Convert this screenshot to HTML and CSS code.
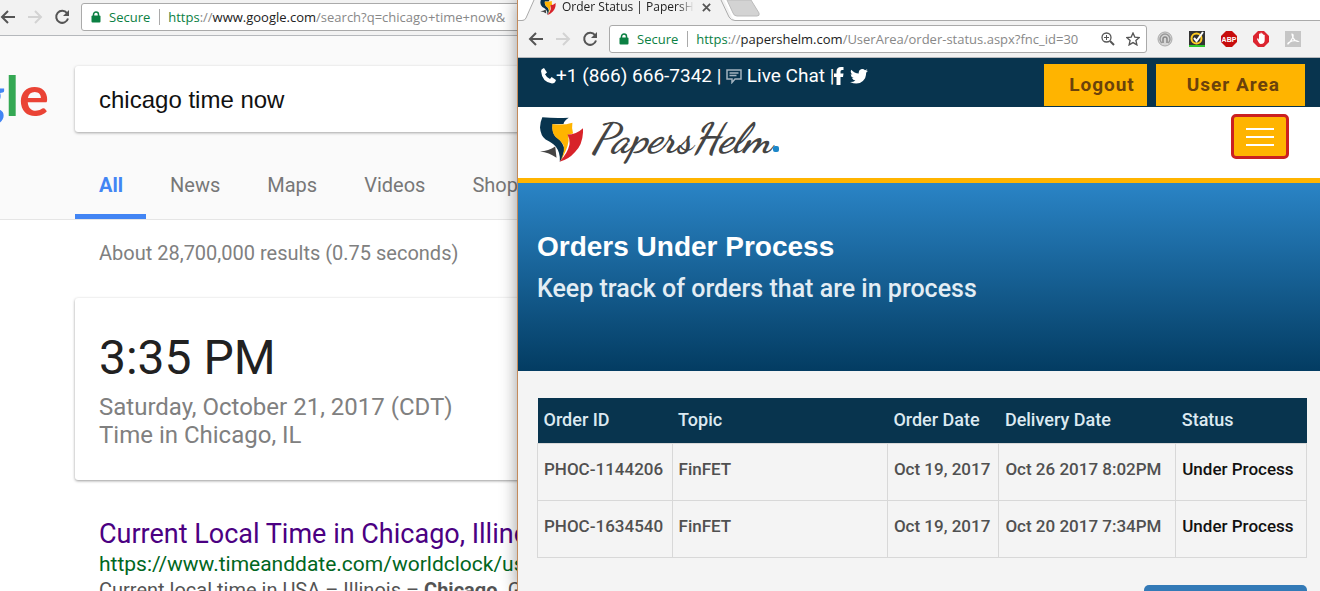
FILE: index.html
```html
<!DOCTYPE html>
<html lang="en">
  <head>
    <meta charset="utf-8" />
    <meta name="viewport" content="width=device-width,initial-scale=1" />
    <title>Order Status | PapersHelm</title>
    <link rel="stylesheet" href="styles.css">
  </head>
  <body>
    <!-- shared icons -->
    <svg class="sprite" aria-hidden="true">
      <symbol id="back" viewBox="0 0 16 16">
        <path d="M15 8H2M8 2L2 8l6 6" fill="none" stroke="currentColor" stroke-width="2" />
      </symbol>
      <symbol id="forward" viewBox="0 0 16 16">
        <path d="M1 8h13M8 2l6 6-6 6" fill="none" stroke="currentColor" stroke-width="2" />
      </symbol>
      <symbol id="reload" viewBox="0 0 16 16">
        <path d="M13 4.2A6 6 0 1 0 14 9.500" fill="none" stroke="currentColor" stroke-width="2" />
        <path d="M15 1v6H9z" fill="currentColor" />
      </symbol>
      <symbol id="lock" viewBox="0 0 10 12">
        <path d="M2.500 6V3.500a2.500 2.500 0 0 1 5 0V6" fill="none" stroke="currentColor" stroke-width="1.500" />
        <rect x="0.500" y="4.500" width="9" height="7" rx="1" fill="currentColor" />
      </symbol>
      <symbol id="shield" viewBox="60 182 130 136">
        <path d="M60 286Q86 284 106 271L110 305Q88 289 60 286z" fill="#444" />
        <path d="M67 183Q106 186 147 184Q133 192 131 203L99 204Q95 226 106 240Q134 260 133 282Q132 302 120 317Q122 290 108 272Q98 260 77 250Q62 240 60 214Q61 196 67 183z" fill="#08344e" />
        <path d="M97 203Q130 208 158 199Q155 215 160 232L144 236Q154 262 122 314Q138 280 130 265Q124 254 108 243Q95 230 97 203z" fill="#ffb400" />
        <path d="M143 235Q170 235 190 216Q192 262 166 288Q145 312 119 317Q144 291 149 266Q151 250 143 235z" fill="#d8232a" />
      </symbol>
    </svg>

    <div class="desktop">
      <section class="window google">
        <div class="toolbar">
          <button type="button" class="tool" aria-label="Back"><svg><use href="#back" /></svg></button>
          <button type="button" class="tool off" aria-label="Forward" disabled><svg><use href="#forward" /></svg></button>
          <button type="button" class="tool" aria-label="Reload"><svg><use href="#reload" /></svg></button>
          <div class="address">
            <svg class="lock"><use href="#lock" /></svg>
            <span class="secure">Secure</span>
            <span class="url"><span class="scheme">https</span>://<b>www.google.com</b>/search?q=chicago+time+now&amp;</span>
          </div>
        </div>

        <header class="search-head">
          <div class="search-row">
            <a class="g-logo" href="#" aria-label="Google home"><span class="g-blue">g</span><span class="g-green">l</span><span class="g-red">e</span></a>
            <input class="search-box" type="text" name="q" value="chicago time now" aria-label="Search" />
          </div>
          <nav class="search-tabs">
            <a class="active" href="#">All</a>
            <a href="#">News</a>
            <a href="#">Maps</a>
            <a href="#">Videos</a>
            <a href="#">Shopping</a>
          </nav>
        </header>

        <main class="results">
          <p class="stats">About 28,700,000 results (0.75 seconds)</p>
          <div class="time-card">
            <div class="clock">3:35 PM</div>
            <div>Saturday, October 21, 2017 (CDT)</div>
            <div>Time in Chicago, IL</div>
          </div>
          <article class="result">
            <a href="#">Current Local Time in Chicago, Illinois</a>
            <cite>https://www.timeanddate.com/worldclock/usa</cite>
            <p>Current local time in USA – Illinois – <b>Chicago</b>. Get</p>
          </article>
        </main>
      </section>

      <section class="window helm">
        <div class="tab-strip">
          <svg class="tab-shape" viewBox="0 0 246 21" aria-hidden="true">
            <path d="M0 20.500H4Q7 20.500 8 18L16 0H206L214 17Q216 20.500 219 20.500V21H0z" fill="#f2f2f2" />
            <path d="M0 20.500H4Q7 20.500 8 18L16 0M203 0L211 17Q213 20.500 217 20.500H246" fill="none" stroke="#aaa" />
            <path d="M209 0H233L241 13Q242 16 239 16H219Q216 16 215 13z" fill="#d3d3d3" stroke="#bbb" />
          </svg>
          <div class="tab">
            <svg class="favicon"><use href="#shield" /></svg>
            <span class="tab-title">Order Status | PapersHelm</span>
            <button type="button" class="tab-close" aria-label="Close tab">
              <svg viewBox="0 0 10 10"><path d="M1 1l8 8M9 1L1 9" stroke="#555" stroke-width="2" /></svg>
            </button>
          </div>
        </div>
        <div class="toolbar">
          <button type="button" class="tool" aria-label="Back"><svg><use href="#back" /></svg></button>
          <button type="button" class="tool off" aria-label="Forward" disabled><svg><use href="#forward" /></svg></button>
          <button type="button" class="tool" aria-label="Reload"><svg><use href="#reload" /></svg></button>
          <div class="address">
            <svg class="lock"><use href="#lock" /></svg>
            <span class="secure">Secure</span>
            <span class="url"><span class="scheme">https</span>://<b>papershelm.com</b>/UserArea/order-status.aspx?fnc_id=30</span>
            <svg class="addr-icon" viewBox="0 0 14 14" fill="none" stroke="#555"><circle cx="5.500" cy="5.500" r="4.500" stroke-width="1.300" /><path d="M9 9l4 4" stroke-width="2" /><path d="M3 5.500h5M5.500 3v5" /></svg>
            <svg class="addr-icon" viewBox="0 0 14 14" fill="none" stroke="#555" stroke-width="1.300"><path d="M7 1l1.800 4.100 4.400.4-3.300 3 1 4.400L7 10.600l-3.900 2.300 1-4.400-3.300-3 4.400-.4z" /></svg>
          </div>
          <div class="extensions">
            <svg viewBox="0 0 16 16"><circle cx="8" cy="8" r="7" fill="#d6d6d6" stroke="#aaa" /><path d="M5 12a5 5 0 1 1 6 0" fill="none" stroke="#999" stroke-width="1.500" /><path d="M6 12V8a2 2 0 0 1 4 0v4" fill="none" stroke="#888" stroke-width="1.500" /></svg>
            <svg viewBox="0 0 16 16"><path d="M0 0h16v16H0z" fill="#333" /><path d="M0 14h16v2H0z" fill="#2fc52f" /><circle cx="7.500" cy="7.500" r="5" fill="none" stroke="#fc2" stroke-width="2" /><path d="M5 7l2.500 3L14 1" fill="none" stroke="#fff" stroke-width="2" /></svg>
            <svg viewBox="0 0 16 16"><path d="M5 0h6l5 5v6l-5 5H5l-5-5V5z" fill="#c70d0d" /><text x="8" y="11" class="abp">ABP</text></svg>
            <svg viewBox="0 0 16 16"><path d="M5 0h6l5 5v6l-5 5H5l-5-5V5z" fill="#dc2530" /><path d="M4 8l1-1 1 2V3q.7-1 1.400 0V2q.7-1 1.400 0v1q.8-1 1.500 0v1q.8-.7 1.400 0v5q0 4-4 4Q6 13 4 8z" fill="#fff" /></svg>
            <svg viewBox="0 0 16 16"><path d="M0 0h16v16H0z" fill="#c6c6c6" /><path d="M7 3q2 0 .500 4Q5.500 11 3 13q-1-1 4-3 4-1 6 .500-3 0-5-4Q7 4 7 3z" fill="none" stroke="#fff" stroke-width="1.200" /></svg>
          </div>
        </div>

        <div class="top-bar">
          <div class="contact">
            <svg class="phone" viewBox="0 0 16 16"><path d="M1 3Q1 1 4 0l3 4.500-2 1.800Q6.500 9.500 10 11l1.600-2L16 12q-1 3.500-4 3.500Q2 14 1 3z" fill="#fff" /></svg><span>+1 (866) 666-7342 |&nbsp;</span>
            <svg class="chat" viewBox="0 0 16 15"><path d="M1 1h14v9H9l-3 3.500V10H1z" fill="none" stroke="#a3b3bf" stroke-width="1.500" /><path d="M3.500 4h9M3.500 6.500h7" stroke="#a3b3bf" stroke-width="1.300" /></svg><a href="#">&nbsp;Live Chat</a><span>&nbsp;|</span>
            <a href="#" aria-label="Facebook"><svg class="facebook" viewBox="0 0 10 18"><path d="M9.500 0v3H8Q6.500 3 6.500 4.500V6.500h3L9 10H6.500v8h-4v-8H0V6.500h2.500V4.500Q2.500 0 7 0z" fill="#fff" /></svg></a>
            <a href="#" aria-label="Twitter"><svg class="twitter" viewBox="0 0 18 15"><path d="M18 1.800q-.8 1.200-1.900 1.900.2 5-3.200 8.300Q8 16.500 0 13q3.200.2 5.400-1.600-2.500-.2-3.400-2.500h1.600Q.8 8 .7 5.200l1.700.4Q-.2 3.500 1.300.7q3 3.600 7.500 3.900Q8.200 1.200 11 .2q2.300-.7 4 1 1.200-.2 2.300-.9-.4 1.300-1.500 2z" fill="#fff" /></svg></a>
          </div>
          <div class="account">
            <a class="btn logout" href="#">Logout</a>
            <a class="btn user-area" href="#">User Area</a>
          </div>
        </div>

        <header class="site-head">
          <a class="brand" href="#">
            <svg class="brand-mark"><use href="#shield" /></svg>
            <span class="brand-name">PapersHelm<span class="dot"></span></span>
          </a>
          <button type="button" class="menu" aria-label="Toggle navigation">
            <span></span><span></span><span></span>
          </button>
        </header>

        <div class="banner">
          <h1>Orders Under Process</h1>
          <p>Keep track of orders that are in process</p>
        </div>

        <main class="orders">
          <table>
            <colgroup>
              <col class="c-id" /><col class="c-topic" /><col class="c-ordered" /><col class="c-due" /><col class="c-status" />
            </colgroup>
            <thead>
              <tr>
                <th>Order ID</th>
                <th>Topic</th>
                <th>Order Date</th>
                <th>Delivery Date</th>
                <th>Status</th>
              </tr>
            </thead>
            <tbody>
              <tr>
                <td>PHOC-1144206</td>
                <td>FinFET</td>
                <td>Oct 19, 2017</td>
                <td>Oct 26 2017 8:02PM</td>
                <td class="status">Under Process</td>
              </tr>
              <tr>
                <td>PHOC-1634540</td>
                <td>FinFET</td>
                <td>Oct 19, 2017</td>
                <td>Oct 20 2017 7:34PM</td>
                <td class="status">Under Process</td>
              </tr>
            </tbody>
          </table>
          <button type="button" class="next" aria-label="Place new order"></button>
        </main>
      </section>
    </div>
  </body>
</html>
```

FILE: styles.css
```css
*,
:after,
:before {
  box-sizing: border-box;
}

html,
body {
  height: 100%;
}

body {
  margin: 0;
  overflow: hidden;
  font-family: Roboto, sans-serif;
}

h1,
p {
  margin: 0;
}

a {
  color: inherit;
  text-decoration: none;
}

button {
  padding: 0;
  border: 0;
  background: none;
}

svg {
  display: block;
  flex: none;
}

.sprite {
  position: absolute;
  width: 0;
  height: 0;
}

.desktop {
  display: grid;
  grid-template-columns: minmax(0, 517fr) minmax(0, 803fr);
  height: 100%;
  overflow: hidden;
}

.window {
  overflow: hidden;
  background: #fff;
}

/* browser chrome */

.toolbar {
  display: flex;
  align-items: center;
  height: 37px;
  padding-left: 10px;
  border-bottom: 1px solid #b5b8bc;
  background: #f2f2f2;
  font: 13px/20px "Open Sans", sans-serif;
}

.tool {
  flex: none;
  margin-right: 11px;
  color: #555;
}

.tool.off {
  color: #d3d3d3;
}

.tool svg {
  width: 16px;
  height: 16px;
}

.address {
  display: flex;
  align-items: center;
  flex: 1;
  min-width: 0;
  height: 28px;
  padding: 0 6px 0 9px;
  border: 1px solid #aaa;
  border-radius: 3px;
  background: #fff;
  white-space: nowrap;
}

.lock {
  width: 10px;
  height: 12px;
  color: #0b8043;
}

.secure {
  margin-left: 8px;
  padding-right: 9px;
  border-right: 1px solid #aaa;
  line-height: 16px;
  color: #0b8043;
}

.url {
  flex: 1;
  margin-left: 8px;
  color: #888;
}

.url b {
  font-weight: 400;
  color: #222;
}

.scheme {
  color: #0b8043;
}

.addr-icon {
  width: 14px;
  height: 14px;
  margin-left: 11px;
}

.extensions {
  display: flex;
  gap: 16px;
  margin: 0 19px 0 10px;
}

.extensions svg {
  width: 16px;
  height: 16px;
}

.abp {
  font: bold 7px "Liberation Sans", sans-serif;
  text-anchor: middle;
  fill: #fff;
}

/* search window */

.google .toolbar {
  height: 36px;
  padding: 0 0 2px;
}

.google .address {
  margin-right: -6px;
}

.search-head {
  padding-top: 30px;
  border-bottom: 1px solid #e5e5e5;
  background: #fafafa;
}

.search-row {
  display: flex;
  align-items: flex-start;
}

.g-logo {
  display: flex;
  flex: none;
  justify-content: flex-end;
  width: 75px;
  padding-right: 26px;
  font: bold 56px/58px Lato, sans-serif;
}

.g-blue {
  color: #4285f4;
}

.g-green {
  color: #34a853;
}

.g-red {
  color: #ea4335;
}

.search-box {
  flex: 1;
  min-width: 0;
  height: 66px;
  margin-right: -6px;
  padding: 2px 24px 0;
  border: 0;
  border-radius: 3px;
  background: #fff;
  box-shadow: 0 1px 3px rgba(0, 0, 0, 0.35);
  font: 24px "Liberation Sans", sans-serif;
  color: #111;
}

.search-tabs {
  display: flex;
  margin: 20px 0 0 75px;
  font-size: 20px;
  line-height: 24px;
  color: #777;
}

.search-tabs a {
  padding: 21px 23px 17px 24px;
  border-bottom: 5px solid transparent;
}

.search-tabs .active {
  border-color: #4285f4;
  font-weight: bold;
  color: #4285f4;
}

.results {
  margin-left: 75px;
}

.stats {
  padding: 21px 24px 33px;
  font-size: 20px;
  line-height: 24px;
  color: #808080;
}

.time-card {
  margin-right: -6px;
  padding: 31px 24px;
  border-radius: 3px;
  box-shadow: 0 1px 3px rgba(0, 0, 0, 0.4);
  font-size: 24px;
  line-height: 28px;
  color: #808080;
}

.clock {
  margin-bottom: 6px;
  font-size: 48px;
  line-height: 58px;
  color: #212121;
}

.result {
  padding: 37px 24px;
  font-size: 20px;
  line-height: 26px;
  white-space: nowrap;
  color: #545454;
}

.result a {
  display: block;
  font-size: 27px;
  line-height: 34px;
  color: #4b0082;
}

.result cite {
  display: block;
  font-style: normal;
  font-size: 21px;
  color: #006621;
}

/* order window */

.helm {
  position: relative;
  z-index: 1;
  border-left: 1px solid #c48a5a;
  background: #f4f4f4;
  box-shadow: 0 0 16px rgba(0, 0, 0, 0.4);
}

.tab-strip {
  position: relative;
  height: 21px;
  border-bottom: 1px solid #aaa;
  background: #fff;
}

.tab-shape {
  position: absolute;
  top: 0;
  left: 0;
  width: 246px;
  height: 21px;
}

.tab {
  position: relative;
  display: flex;
  align-items: center;
  width: 196px;
  height: 14px;
  margin-left: 22px;
  font: 12px/16px "Open Sans", sans-serif;
  color: #222;
}

.favicon {
  width: 16px;
  height: 16px;
  margin-right: 6px;
}

.tab-title {
  width: 132px;
  overflow: hidden;
  white-space: nowrap;
  -webkit-mask-image: linear-gradient(to right, #000 88%, transparent);
  mask-image: linear-gradient(to right, #000 88%, transparent);
}

.tab-close {
  margin-left: 8px;
}

.tab-close svg {
  width: 9px;
  height: 9px;
}

.top-bar {
  display: flex;
  justify-content: space-between;
  height: 49px;
  padding: 6px 15px 0 22px;
  background: #08344e;
}

.contact {
  display: flex;
  align-items: center;
  height: 24px;
  font-size: 19px;
  line-height: 24px;
  white-space: nowrap;
  color: #fff;
}

.phone {
  width: 16px;
  height: 16px;
}

.chat {
  width: 16px;
  height: 15px;
}

.facebook {
  width: 10px;
  height: 18px;
  margin-right: 6px;
}

.twitter {
  width: 18px;
  height: 15px;
}

.account {
  display: flex;
  gap: 9px;
}

.btn {
  height: 42px;
  background: #ffb400;
  font-size: 19px;
  font-weight: bold;
  line-height: 42px;
  letter-spacing: 1px;
  color: #6b420b;
}

.logout {
  padding: 0 12px 0 25px;
}

.user-area {
  padding: 0 25px 0 31px;
}

.site-head {
  display: flex;
  justify-content: space-between;
  height: 76px;
  padding: 7px 31px 0 22px;
  border-bottom: 5px solid #ffb400;
  background: #fff;
}

.brand {
  display: flex;
  align-items: center;
  height: 50px;
}

.brand-mark {
  width: 43px;
  height: 45px;
}

.brand-name {
  margin-left: 8px;
  font: italic bold 42px/48px "Dancing Script", "Brush Script MT", cursive;
  color: #444;
}

.dot {
  display: inline-block;
  width: 6px;
  height: 6px;
  margin-left: 2px;
  border-radius: 2px;
  background: #1c87c9;
}

.menu {
  display: flex;
  flex-direction: column;
  align-items: center;
  justify-content: center;
  gap: 6px;
  width: 58px;
  height: 45px;
  border: 3px solid #cb2020;
  border-radius: 5px;
  background: #ffb400;
}

.menu span {
  width: 28px;
  height: 2px;
  background: #fff;
}

.banner {
  height: 188px;
  padding: 46px 19px;
  background: linear-gradient(#2a84c6, #033c62);
  color: #fff;
}

.banner h1 {
  font: bold 28px/36px "Liberation Sans", sans-serif;
}

.banner p {
  margin-top: 8px;
  font-size: 25px;
  font-weight: 500;
  line-height: 32px;
  color: #e3edf4;
}

.orders {
  display: flex;
  flex-direction: column;
  padding: 27px 13px 0 19px;
}

table {
  width: 100%;
  border-collapse: collapse;
  table-layout: fixed;
  font-size: 17px;
  font-weight: 500;
  line-height: 24px;
  color: #505050;
}

.c-id {
  width: 17.5%;
}

.c-topic {
  width: 28%;
}

.c-ordered {
  width: 14.5%;
}

.c-due {
  width: 23%;
}

.c-status {
  width: 17%;
}

th,
td {
  padding: 0 6px;
  text-align: left;
  white-space: nowrap;
}

th {
  height: 45px;
  background: #08344e;
  font-size: 18px;
  font-weight: 500;
  color: #dce9f1;
}

td {
  height: 57px;
  padding-bottom: 5px;
  border: 1px solid #d8d8d8;
}

.status {
  color: #111;
}

.next {
  align-self: flex-end;
  width: 163px;
  height: 44px;
  margin-top: 27px;
  border-radius: 5px;
  background: #337ab7;
}
```
